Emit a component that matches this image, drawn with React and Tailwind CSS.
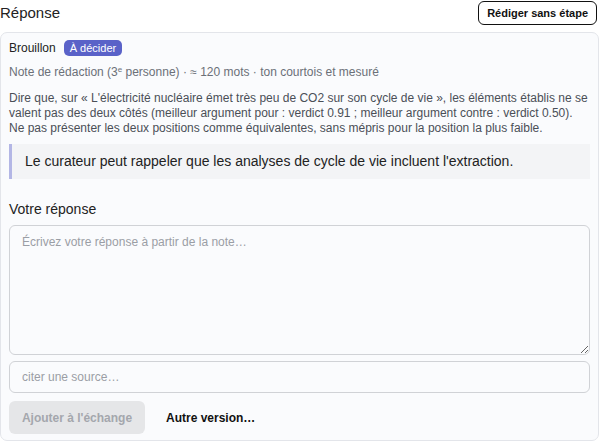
import { useState } from "react";

export default function App() {
  const [text, setText] = useState("");
  const [source, setSource] = useState("");

  return (
    <div className="w-[599px] h-[441px] bg-white text-[#1f2937] font-['Liberation_Sans',Arial,sans-serif] overflow-hidden">
      <div className="flex items-center justify-between h-[26px] pr-[2px]">
        <h2 className="text-[15px] leading-5 text-[#222]">Réponse</h2>
        <button className="h-[24px] px-[8px] border border-[#111] rounded-[6px] text-[11px] font-bold text-[#111] bg-white">
          Rédiger sans étape
        </button>
      </div>

      <div className="mt-[6px] border border-[#e3e5ea] rounded-[7px] bg-[#fafbfd] pl-[8px] pr-[7px] pt-[7px] pb-[6px]">
        <div className="flex items-center gap-[8px] h-[16px]">
          <span className="text-[12px] text-[#222]">Brouillon</span>
          <span className="h-[16px] px-[6px] rounded-[5px] bg-[#5a62c8] text-white text-[11px] leading-[16px]">À décider</span>
        </div>

        <p className="mt-[8px] text-[12px] leading-4 text-[#6b7078]">
          Note de rédaction (3<sup className="text-[8px]">e</sup> personne) · ≈ 120 mots · ton courtois et mesuré
        </p>

        <p className="mt-[11px] text-[12px] leading-[15px] text-[#4a4f57]">
          Dire que, sur « L'électricité nucléaire émet très peu de CO2 sur son cycle de vie », les éléments établis ne se valent pas des deux côtés (meilleur argument pour : verdict 0.91 ; meilleur argument contre : verdict 0.50).
          <br />
          Ne pas présenter les deux positions comme équivalentes, sans mépris pour la position la plus faible.
        </p>

        <div className="mt-[8px] mr-[1px] h-[35px] flex items-center border-l-[3px] border-[#b3b6e5] bg-[#f3f4f6] pl-[13px]">
          <span className="text-[14px] text-[#222]">Le curateur peut rappeler que les analyses de cycle de vie incluent l'extraction.</span>
        </div>

        <div className="mt-[20px] text-[14px] leading-5 text-[#222]">Votre réponse</div>

        <textarea
          value={text}
          onChange={(e) => setText(e.target.value)}
          placeholder="Écrivez votre réponse à partir de la note…"
          className="mt-[6px] block w-[581px] h-[130px] border border-[#d0d2d6] rounded-[6px] bg-[#fafbfd] px-[12px] py-[8px] text-[12px] leading-4 placeholder:text-[#9a9ea5] outline-none"
        />

        <input
          value={source}
          onChange={(e) => setSource(e.target.value)}
          placeholder="citer une source…"
          className="mt-[6px] block w-[581px] h-[32px] border border-[#d0d2d6] rounded-[6px] bg-[#fafbfd] px-[12px] text-[12px] placeholder:text-[#9a9ea5] outline-none"
        />

        <div className="mt-[8px] flex items-center gap-[21px]">
          <button disabled className="h-[33px] w-[136px] rounded-[6px] bg-[#e5e6e8] text-[12px] font-bold text-[#a4a7ad]">
            Ajouter à l'échange
          </button>
          <button className="text-[12px] font-bold text-[#111]">Autre version…</button>
        </div>
      </div>
    </div>
  );
}
